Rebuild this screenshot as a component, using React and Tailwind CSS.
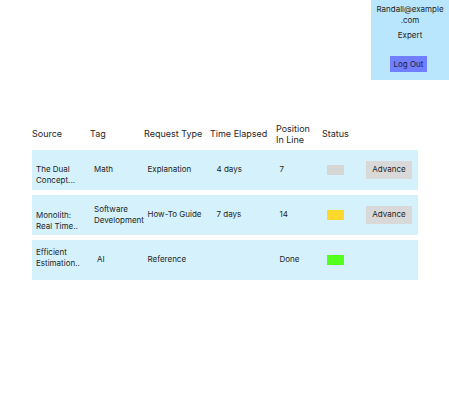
const rows = [
  {
    source: ['The Dual', 'Concept...'],
    sourceClass: 'mt-[11px]',
    tag: ['Math'],
    tagClass: 'pl-[4px]',
    type: 'Explanation',
    time: '4 days',
    position: '7',
    status: 'bg-[#d6d6d6]',
    advance: true,
  },
  {
    source: ['Monolith:', 'Real Time..'],
    sourceClass: 'mt-[12px]',
    tag: ['Software', 'Development'],
    tagClass: 'pl-[4px]',
    type: 'How-To Guide',
    time: '7 days',
    position: '14',
    status: 'bg-[#fed82c]',
    advance: true,
  },
  {
    source: ['Efficient', 'Estimation..'],
    sourceClass: 'mb-[4px]',
    tag: ['AI'],
    tagClass: 'pl-[7px]',
    type: 'Reference',
    time: '',
    position: 'Done',
    status: 'bg-[#52ff1f]',
    advance: false,
  },
];

const cols = 'grid grid-cols-[58px_54px_66px_66px_46px_44px_1fr]';

export default function App() {
  return (
    <div className="w-[449px] h-[400px] bg-white text-[#1f1f1f] font-['Inter',sans-serif]">
      <div className="flex justify-end">
        <div className="w-[78px] h-[80px] bg-[#b9e6fd] flex flex-col items-center pt-[4px] text-[8px] leading-[11px] text-center">
          <p>Randall@example<br />.com</p>
          <p className="mt-[3.5px]">Expert</p>
          <button className="mt-[15.5px] w-[37px] h-[16px] bg-[#6f7fff] text-[8px] text-[#1c1c3a] -ml-[3px]">
            Log Out
          </button>
        </div>
      </div>

      <div className="ml-[32px] mr-[31px] mt-[42.5px]">
        <div className={`${cols} items-center text-[9px] leading-[11px]`}>
          <span>Source</span>
          <span>Tag</span>
          <span>Request Type</span>
          <span>Time Elapsed</span>
          <span>Position<br />In Line</span>
          <span>Status</span>
          <span></span>
        </div>

        <div className="mt-[5.5px] flex flex-col gap-[5.5px]">
          {rows.map((r, i) => (
            <div key={i} className={`${cols} h-[39.5px] items-center bg-[#d4f1fc] text-[8px] leading-[11px]`}>
              <span className={`pl-[4px] whitespace-nowrap ${r.sourceClass}`}>
                {r.source[0]}<br />{r.source[1]}
              </span>
              <span className={`whitespace-nowrap ${r.tagClass}`}>
                {r.tag.map((t, j) => (
                  <span key={j} className="block">{t}</span>
                ))}
              </span>
              <span className="pl-[3.5px] whitespace-nowrap">{r.type}</span>
              <span className="pl-[6.5px] whitespace-nowrap">{r.time}</span>
              <span className="pl-[3.5px]">{r.position}</span>
              <span className="pl-[5px]">
                <span className={`block w-[17px] h-[10px] ${r.status}`}></span>
              </span>
              <span>
                {r.advance && (
                  <button className="w-[46px] h-[18px] bg-[#d9d9d9] text-[8px] text-[#1f1f1f]">
                    Advance
                  </button>
                )}
              </span>
            </div>
          ))}
        </div>
      </div>
    </div>
  );
}
